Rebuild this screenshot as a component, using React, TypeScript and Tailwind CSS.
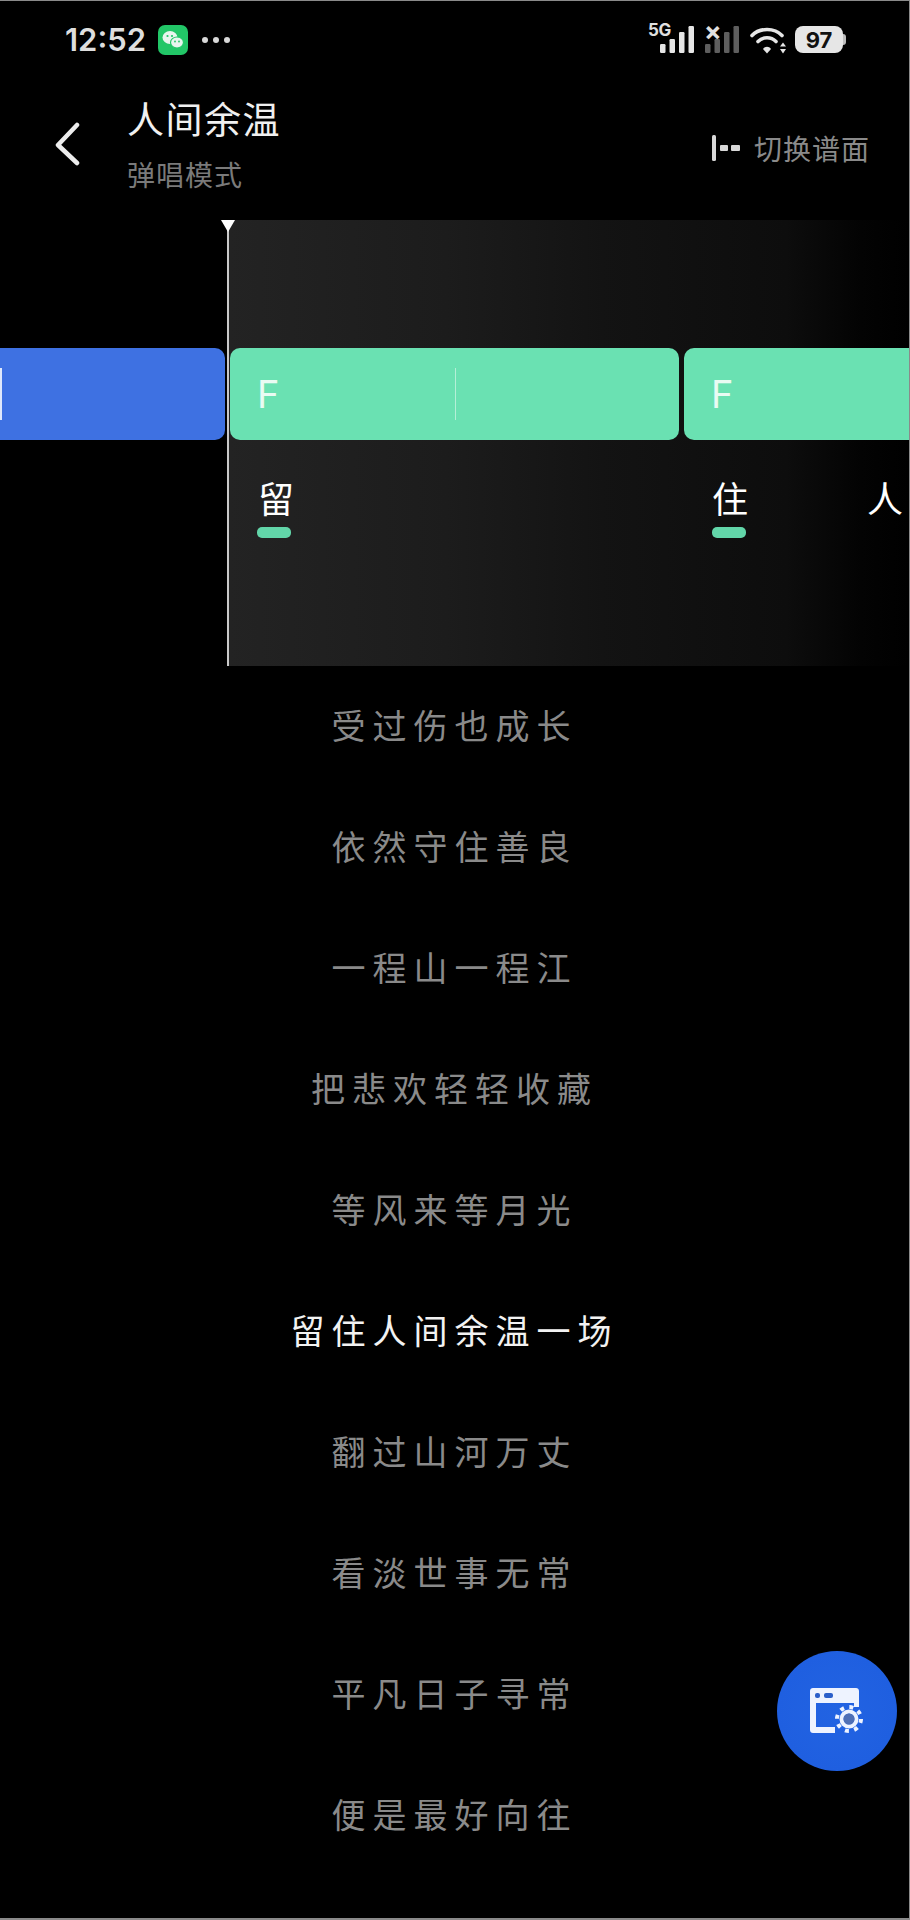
const cjk = "font-['Noto_Sans_CJK_SC','Noto_Sans',sans-serif]";

const lyrics = [
  "受过伤也成长",
  "依然守住善良",
  "一程山一程江",
  "把悲欢轻轻收藏",
  "等风来等月光",
  "留住人间余温一场",
  "翻过山河万丈",
  "看淡世事无常",
  "平凡日子寻常",
  "便是最好向往",
];

function Signal({ dim }: { dim?: boolean }) {
  const c = dim ? "#5e5e5e" : "#e6e6e6";
  return (
    <svg width="34" height="27" viewBox="0 0 34 27" fill={c}>
      <rect x="0" y="18" width="5.5" height="9" rx="1.2" />
      <rect x="9.5" y="13" width="5.5" height="14" rx="1.2" />
      <rect x="19" y="6" width="5.5" height="21" rx="1.2" />
      <rect x="28.5" y="0" width="5.5" height="27" rx="1.2" />
    </svg>
  );
}

function StatusBar() {
  return (
    <div className="flex h-[77px] shrink-0 items-center pl-[65px] pr-[63px]">
      <span className="font-['Inter',sans-serif] text-[31px] font-semibold leading-none text-[#dedede]">12:52</span>
      <svg className="ml-[12px]" width="30" height="30" viewBox="0 0 30 30">
        <rect width="30" height="30" rx="7" fill="#22c667" />
        <ellipse cx="12" cy="12.5" rx="7.5" ry="6.5" fill="#e8f5ee" />
        <ellipse cx="19" cy="17.5" rx="6.5" ry="5.5" fill="#e8f5ee" stroke="#22c667" strokeWidth="1.2" />
        <circle cx="9.5" cy="11" r="1.1" fill="#22c667" />
        <circle cx="14" cy="11" r="1.1" fill="#22c667" />
        <circle cx="17" cy="16.5" r="0.9" fill="#22c667" />
        <circle cx="21" cy="16.5" r="0.9" fill="#22c667" />
      </svg>
      <div className="ml-[14px] flex gap-[5px]">
        <span className="size-[6px] rounded-full bg-[#d8d8d8]" />
        <span className="size-[6px] rounded-full bg-[#d8d8d8]" />
        <span className="size-[6px] rounded-full bg-[#d8d8d8]" />
      </div>
      <div className="ml-auto flex items-center">
        <div className="relative h-[27px] w-[34px]">
          <span className="absolute left-[-12px] top-[-4px] font-['Inter',sans-serif] text-[17px] font-bold leading-none tracking-[-0.3px] text-[#e0e0e0]">5G</span>
          <Signal />
        </div>
        <div className="relative ml-[11px] h-[27px] w-[34px]">
          <span className="absolute left-[-1px] top-[-7px] font-['Inter',sans-serif] text-[26px] font-bold leading-none text-[#e0e0e0]">×</span>
          <Signal dim />
        </div>
        <svg className="ml-[11px]" width="38" height="28" viewBox="0 0 38 28" fill="none" stroke="#e6e6e6" strokeWidth="3.6" strokeLinecap="round">
          <path d="M2 9.5C9.5 1.5 24.5 1.5 32 9.5" />
          <path d="M8 15.5C13 10.5 21 10.5 26 15.5" />
          <path d="M13 23L17 27.5L21 23C19 20 15 20 13 23Z" fill="#e6e6e6" stroke="none" />
          <path d="M33 16.5L36 20.5H30ZM33 27.5L30 23H36Z" fill="#e6e6e6" stroke="none" />
        </svg>
        <div className="ml-[7px] flex items-center">
          <div className="flex h-[27px] w-[48px] items-center justify-center rounded-[8px] bg-[#e6e6e6] font-['Inter',sans-serif] text-[22px] font-bold leading-none text-[#111]">97</div>
          <span className="h-[11px] w-[3px] rounded-r-[3px] bg-[#bdbdbd]" />
        </div>
      </div>
    </div>
  );
}

function Header() {
  return (
    <div className="flex h-[142px] shrink-0 items-start">
      <svg className="ml-[55px] mt-[44px]" width="26" height="44" viewBox="0 0 26 44" fill="none" stroke="#ededed" strokeWidth="4.5" strokeLinecap="round" strokeLinejoin="round">
        <path d="M22 3L3 23L22 41" />
      </svg>
      <div className={`ml-[46px] mt-[15px] flex flex-col ${cjk}`}>
        <span className="text-[37px] leading-[50px] tracking-[1.5px] text-[#f0f0f0]">人间余温</span>
        <span className="mt-[12px] text-[28px] leading-[38px] tracking-[1px] text-[#7a7a7a]">弹唱模式</span>
      </div>
      <div className="ml-auto mr-[39px] mt-[51px] flex items-center">
        <svg width="30" height="28" viewBox="0 0 30 28" fill="#d8d8d8">
          <rect x="1" y="1" width="4" height="26" rx="1.5" />
          <rect x="9" y="11" width="8" height="6" rx="1" />
          <rect x="20" y="11" width="9" height="6" rx="1" />
        </svg>
        <span className={`ml-[13px] text-[28px] leading-[38px] tracking-[1px] text-[#8a8a8a] ${cjk}`}>切换谱面</span>
      </div>
    </div>
  );
}

function Timeline() {
  return (
    <div className="relative h-[446px] shrink-0 overflow-hidden">
      <div className="absolute inset-y-0 left-[229px] right-0 bg-[linear-gradient(90deg,#232323_0%,#1c1c1c_32%,#131313_55%,#0d0d0d_82%,#030303_93%,#000000_100%)]" />
      <div className="relative mt-[128px] flex h-[92px] gap-[5px]">
        <div className="relative h-full w-[225px] shrink-0 rounded-r-[10px] bg-[#3e71e2]">
          <span className="absolute left-0 top-[20px] h-[52px] w-[2px] bg-[#dfe8fb]" />
        </div>
        <div className="relative h-full w-[449px] shrink-0 rounded-[10px] bg-[#6ae1b2]">
          <span className="absolute left-[27px] top-[17px] font-['Inter',sans-serif] text-[38px] leading-[58px] text-[#e9fbf3]">F</span>
          <span className="absolute left-[225px] top-[20px] h-[52px] w-px bg-[#b4efd7]" />
        </div>
        <div className="relative h-full grow rounded-l-[10px] bg-[#6ae1b2]">
          <span className="absolute left-[27px] top-[17px] font-['Inter',sans-serif] text-[38px] leading-[58px] text-[#e9fbf3]">F</span>
        </div>
      </div>
      <div className={`relative mt-[33px] flex text-[36px] leading-[48px] text-white ${cjk}`}>
        <div className="ml-[258px] flex w-[454px] shrink-0 flex-col">
          <span>留</span>
          <span className="ml-[-1px] mt-[6px] h-[11px] w-[34px] rounded-[5px] bg-[#62d6a9]" />
        </div>
        <div className="flex w-[155px] shrink-0 flex-col">
          <span>住</span>
          <span className="mt-[6px] h-[11px] w-[34px] rounded-[5px] bg-[#62d6a9]" />
        </div>
        <span>人</span>
      </div>
      <div className="absolute inset-y-0 left-[227px] w-[2px] bg-[#c9c9c9]" />
      <div className="absolute left-[221px] top-0 h-0 w-0 border-x-[7px] border-t-[12px] border-x-transparent border-t-white" />
    </div>
  );
}

function Lyrics() {
  return (
    <div className={`-mt-[2px] flex flex-col items-center ${cjk}`}>
      {lyrics.map((l, i) => (
        <div
          key={l}
          className={`flex h-[121px] items-center text-[34px] leading-none tracking-[7px] ${i === 5 ? "text-[#f2f2f2]" : "text-[#8a8a8a]"}`}
        >
          {l}
        </div>
      ))}
    </div>
  );
}

export default function App() {
  return (
    <div className="relative h-[1920px] w-[910px] overflow-hidden border-b-[2px] border-r-[1px] border-t-[1px] border-[#8a8a8a] bg-black">
      <StatusBar />
      <Header />
      <Timeline />
      <Lyrics />
      <div className="absolute left-[777px] top-[1650px] flex size-[120px] items-center justify-center rounded-full bg-[radial-gradient(circle,#2263e2_0%,#1f5fe0_70%,#1a56d6_100%)]">
        <svg width="54" height="46" viewBox="0 0 54 46" fill="none">
          <path fillRule="evenodd" clipRule="evenodd" d="M3 0H46C47.7 0 49 1.3 49 3V19H44V15H6V39H25V45H3C1.3 45 0 43.7 0 42V3C0 1.3 1.3 0 3 0Z" fill="#eef3ff" />
          <rect x="5" y="5" width="5" height="5" rx="2" fill="#2b5fc9" />
          <rect x="14" y="5" width="9" height="5" rx="2" fill="#2b5fc9" />
          <circle cx="39" cy="31" r="7.5" stroke="#eef3ff" strokeWidth="4" />
          <circle cx="39" cy="31" r="12" stroke="#eef3ff" strokeWidth="4" strokeDasharray="4 5.42" />
          <circle cx="39" cy="31" r="5.5" fill="#4f6fb5" />
        </svg>
      </div>
    </div>
  );
}
